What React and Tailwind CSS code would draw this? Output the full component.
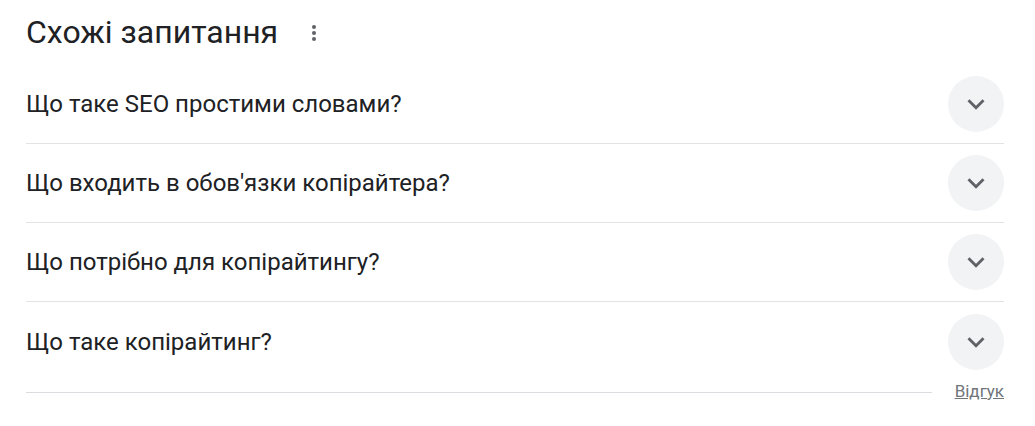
import React from 'react';

const questions = [
  'Що таке SEO простими словами?',
  "Що входить в обов'язки копірайтера?",
  'Що потрібно для копірайтингу?',
  'Що таке копірайтинг?',
];

const Chevron = () => (
  <svg width="34" height="34" viewBox="0 0 24 24" fill="#5f6368">
    <path d="M7.41 8.59 12 13.17l4.59-4.58L18 10l-6 6-6-6 1.41-1.41z" />
  </svg>
);

const App = () => {
  return (
    <div className="w-[1035px] h-[426px] bg-white pl-[26px] pr-[31px] font-['Roboto',sans-serif] text-[#202124]">
      <div className="flex items-center h-[65px] pb-[2px]">
        <h2 className="text-[32px] leading-none">Схожі запитання</h2>
        <div className="ml-[34px] flex flex-col gap-[2px] mt-[2px]">
          <span className="w-[4px] h-[4px] rounded-full bg-[#5f6368]"></span>
          <span className="w-[4px] h-[4px] rounded-full bg-[#5f6368]"></span>
          <span className="w-[4px] h-[4px] rounded-full bg-[#5f6368]"></span>
        </div>
      </div>
      <div>
        {questions.map((q, i) => (
          <div
            key={i}
            className={
              i < questions.length - 1
                ? 'flex items-center justify-between h-[79px] border-b border-[#e3e3e3]'
                : 'flex items-center justify-between h-[79px]'
            }
          >
            <span className="text-[24px]">{q}</span>
            <div className="w-[56px] h-[56px] rounded-full bg-[#f1f3f4] flex items-center justify-center">
              <Chevron />
            </div>
          </div>
        ))}
      </div>
      <div className="flex items-center -mt-[2px]">
        <div className="flex-1 border-t border-[#dadce0] mt-[2px]"></div>
        <a className="ml-[23px] text-[17px] text-[#70757a] underline">Відгук</a>
      </div>
    </div>
  );
};

export default App;
